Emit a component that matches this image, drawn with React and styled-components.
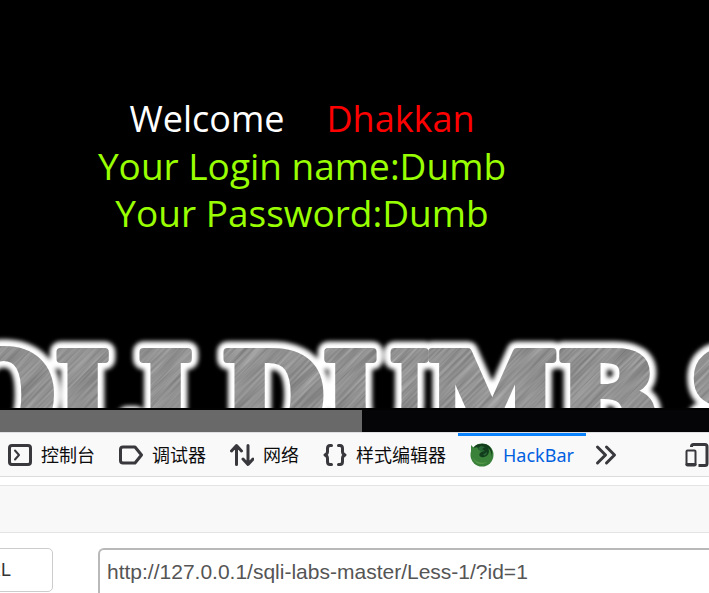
import React from "react";
import styled, { createGlobalStyle } from "styled-components";

const GlobalStyle = createGlobalStyle`
  * { box-sizing: border-box; }
  html, body, #root { height: 100%; }
  body { margin: 0; background: #fff; overflow: hidden; }
`;

const Window = styled.div`
  display: flex;
  flex-direction: column;
  height: 100%;
  overflow: hidden;
`;

const Page = styled.main`
  flex: none;
  background: #000;
`;

const Greeting = styled.section`
  padding: 95px 105px 0 0;
  font: 37px/47px "Open Sans", "Noto Sans", sans-serif;
  text-align: center;
  white-space: nowrap;
  color: #99ff00;
`;

const WelcomeLine = styled.div`
  display: flex;
  justify-content: center;
  gap: 42px;
  color: #fff;
  font-size: 36px;
`;

const UserName = styled.span`
  color: #ff0000;
`;

const Banner = styled.svg`
  display: block;
  width: 100%;
  height: 86px;
  margin-top: 86px;
`;

const ScrollTrack = styled.div`
  height: 24px;
  border-top: 2px solid #020203;
  background: #050507;
`;

const ScrollThumb = styled.div`
  width: 51%;
  height: 22px;
  background: #696969;
`;

const TabBar = styled.nav`
  display: flex;
  flex: none;
  height: 45px;
  border-top: 1px solid #e0e0e2;
  border-bottom: 1px solid #dcdcde;
  background: #f9f9fa;
  overflow: hidden;
`;

const Tab = styled.button`
  display: flex;
  flex: none;
  align-items: center;
  gap: 9px;
  padding: 0 12px;
  border: 0;
  border-top: 3px solid ${(p) => (p.$active ? "#0a84ff" : "transparent")};
  border-bottom: 3px solid transparent;
  background: transparent;
  color: ${(p) => (p.$active ? "#0060df" : "#0c0c0d")};
  font: 18px/24px "Noto Sans", "Noto Sans CJK SC", sans-serif;
  white-space: nowrap;

  &:first-child { padding-left: 8px; }
`;

const IconButton = styled.button`
  display: flex;
  flex: none;
  align-items: center;
  padding: 0 8px;
  border: 0;
  background: transparent;

  &:last-child { margin-left: auto; padding: 0; }
`;

const Icon = styled.svg`
  display: block;
  flex: none;
  width: 24px;
  height: 24px;
  fill: none;
  stroke: #38383d;
  stroke-width: 3;
  stroke-linecap: round;
  stroke-linejoin: round;
`;

const Options = styled.div`
  flex: none;
  height: 48px;
  margin-top: 8px;
  border: solid #e4e4e4;
  border-width: 1px 0;
  background: #f8f8f8;
`;

const UrlRow = styled.form`
  display: flex;
  flex: none;
  align-items: flex-start;
  gap: 45px;
  padding-top: 15px;
`;

const LoadButton = styled.button`
  flex: none;
  width: 160px;
  height: 44px;
  margin-left: -107px;
  padding: 0 41px 0 0;
  border: 1px solid #ccc;
  border-radius: 5px;
  background: #fff;
  color: #333;
  font: 18px/24px "Liberation Sans", Arial, sans-serif;
  text-align: right;
`;

const UrlInput = styled.input`
  flex: 1;
  min-width: 0;
  height: 60px;
  padding: 0 7px 12px;
  border: 2px solid #b9b9b9;
  border-right: 0;
  border-radius: 6px 0 0 6px;
  background: #fff;
  color: #555;
  font: 21px/30px "Liberation Sans", Arial, sans-serif;
  outline: 0;
`;

const words = [
  { text: "SQLI", x: -133 },
  { text: "DUMB", x: 222 },
  { text: "SERIES", x: 690 },
];

function BannerWords(props) {
  return (
    <g fontFamily="DejaVu Serif, serif" fontWeight="bold" fontSize="118" strokeLinejoin="round" {...props}>
      {words.map((w) => (
        <text key={w.text} x={w.x} y="116">{w.text}</text>
      ))}
    </g>
  );
}

function BrushedBanner() {
  return (
    <Banner role="img" aria-label="SQLI DUMB SERIES">
      <defs>
        <filter id="glow" x="-10%" y="-20%" width="120%" height="140%">
          <feGaussianBlur stdDeviation="2" />
        </filter>
        <filter id="grain" x="0" y="0" width="100%" height="100%" colorInterpolationFilters="sRGB">
          <feTurbulence type="fractalNoise" baseFrequency="0.015 0.4" numOctaves="3" seed="4" />
          <feColorMatrix values="0.28 0 0 0 0.43  0.28 0 0 0 0.43  0.28 0 0 0 0.43  0 0 0 0 1" />
        </filter>
        <mask id="letters" maskUnits="userSpaceOnUse" x="0" y="0" width="2000" height="86">
          <BannerWords fill="#fff" stroke="#fff" strokeWidth="8" />
        </mask>
      </defs>
      <BannerWords fill="#fff" stroke="#fff" strokeWidth="21" filter="url(#glow)" />
      <g mask="url(#letters)">
        <rect x="-400" y="-200" width="1400" height="1200" transform="rotate(-45)" filter="url(#grain)" />
      </g>
    </Banner>
  );
}

const ConsoleIcon = () => (
  <Icon viewBox="0 0 24 24">
    <rect x="1.5" y="2.5" width="21" height="19" rx="2.5" />
    <path d="M7 7.5l4 4.5-4 4.5" strokeWidth="2" />
  </Icon>
);
const DebuggerIcon = () => (
  <Icon viewBox="0 0 24 24">
    <path d="M4 4h12l6.500 8-6.500 8H4a2.500 2.500 0 0 1-2.500-2.500v-11A2.500 2.500 0 0 1 4 4z" />
  </Icon>
);
const NetworkIcon = () => (
  <Icon viewBox="0 0 24 24">
    <path d="M6.500 21.500V3M1.500 8l5-5.500 5 5.500M18 2.500V21M13 16l5 5.500 5-5.500" />
  </Icon>
);
const BracesIcon = () => (
  <Icon viewBox="0 0 24 24">
    <path d="M8.500 2.500H7C5 2.500 4.500 4 4.500 5.500v3c0 2-1 3-2.500 3.500 1.500.5 2.500 1.500 2.500 3.500v3c0 1.500.5 3 2.500 3h1.500M15.500 2.500H17c2 0 2.500 1.500 2.500 3v3c0 2 1 3 2.500 3.500-1.500.5-2.500 1.500-2.500 3.500v3c0 1.500-.5 3-2.500 3h-1.500" />
  </Icon>
);
const HackBarIcon = () => (
  <Icon viewBox="0 0 24 24">
    <g stroke="none">
      <circle cx="12" cy="12" r="11.500" fill="#39803a" />
      <path d="M5 3C9 0 17 0 20 4c3 4 3 9-1 12-4 3-11 3-13-1l4 1c-3-2-5-4-4-7L3 7z" fill="#123d1c" />
      <path d="M1 2l3 3 3-1 2 3 4 1-3 2c-2 3 1 5 4 4 5-1 6-6 4-9 5 4 5 12-1 16-8 4-16-1-16-10z" fill="#3a8139" />
      <path d="M8 5l3-2 4 1-3 2 3 2-4 1zM14 11l3-2c0 3-2 4-4 3z" fill="#286735" />
      <path d="M3 15c3 4 8 6 14 4-5 4-12 2-14-4z" fill="#57994a" />
    </g>
  </Icon>
);
const MoreIcon = () => (
  <Icon viewBox="0 0 24 24">
    <path d="M3.500 4l8 8-8 8M12.500 4l8 8-8 8" />
  </Icon>
);
const ResponsiveIcon = () => (
  <Icon viewBox="0 0 24 24">
    <path d="M6.500 4V3.500a2 2 0 0 1 2-2H20a2 2 0 0 1 2 2v17a2 2 0 0 1-2 2h-6.500" strokeLinecap="butt" />
    <rect x="1.500" y="7.500" width="9" height="15" rx="1" strokeWidth="2" />
    <path d="M2 21.500h8" strokeWidth="3" />
  </Icon>
);

export default function App() {
  return (
    <Window>
      <GlobalStyle />
      <Page>
        <Greeting>
          <WelcomeLine>
            <span>Welcome</span>
            <UserName>Dhakkan</UserName>
          </WelcomeLine>
          <div>Your Login name:Dumb</div>
          <div>Your Password:Dumb</div>
        </Greeting>
        <BrushedBanner />
        <ScrollTrack>
          <ScrollThumb />
        </ScrollTrack>
      </Page>
      <TabBar>
        <Tab type="button"><ConsoleIcon />控制台</Tab>
        <Tab type="button"><DebuggerIcon />调试器</Tab>
        <Tab type="button"><NetworkIcon />网络</Tab>
        <Tab type="button"><BracesIcon />样式编辑器</Tab>
        <Tab type="button" $active><HackBarIcon />HackBar</Tab>
        <IconButton type="button" aria-label="More tools"><MoreIcon /></IconButton>
        <IconButton type="button" aria-label="Responsive design mode"><ResponsiveIcon /></IconButton>
      </TabBar>
      <Options />
      <UrlRow>
        <LoadButton type="button">Load URL</LoadButton>
        <UrlInput type="text" aria-label="URL" defaultValue="http://127.0.0.1/sqli-labs-master/Less-1/?id=1" />
      </UrlRow>
    </Window>
  );
}
